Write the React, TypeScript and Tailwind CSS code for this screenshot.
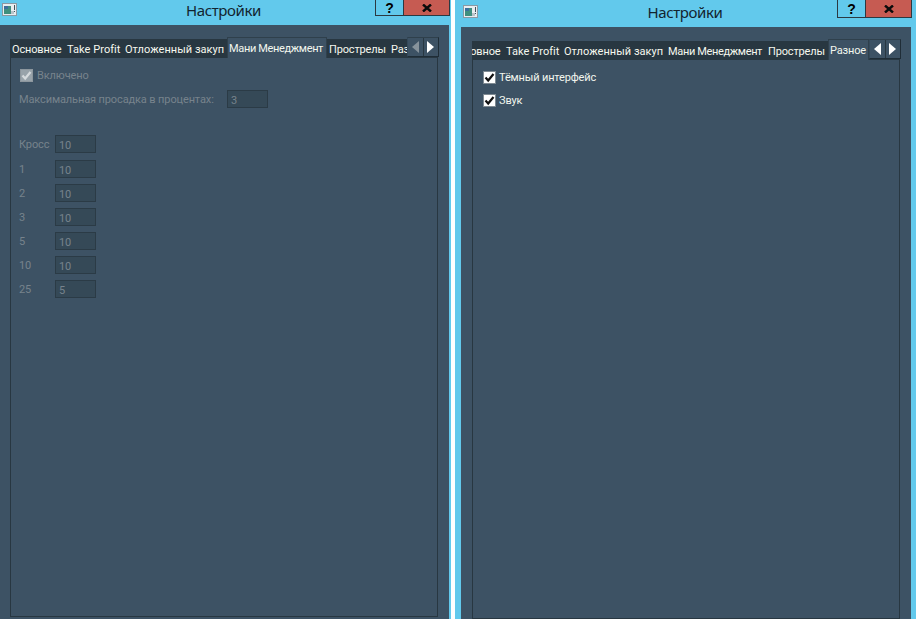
const font = "[font-family:Roboto,sans-serif]";

function WinIcon() {
  return (
    <svg width="15" height="13" viewBox="0 0 15 13" className="shrink-0">
      <rect x="0.5" y="0.5" width="14" height="12" fill="#e8edf0" stroke="#8b99a3" />
      <rect x="2" y="3" width="7" height="8" fill="#3f8f7f" />
      <rect x="2" y="3" width="4" height="3" fill="#3b6f9c" />
      <rect x="9" y="8" width="3" height="3" fill="#b9c3c9" />
      <rect x="12" y="2" width="1" height="5" fill="#44525c" />
      <rect x="12" y="8" width="1" height="1" fill="#44525c" />
    </svg>
  );
}

function TitleBar({ h, btnH, titleClass, iconTop }: { h: string; btnH: string; titleClass: string; iconTop: string }) {
  return (
    <div className={`relative flex items-start justify-center bg-[#62c9ec] ${h}`}>
      <div className={`absolute left-[2px] ${iconTop}`}>
        <WinIcon />
      </div>
      <span className={`-ml-[2px] text-[15px] leading-[20px] tracking-[-0.4px] text-[#12242f] font-['Noto_Sans',sans-serif] ${titleClass}`}>Настройки</span>
      <div className={`absolute right-[-1px] top-0 flex ${btnH}`}>
        <div className="flex w-[29px] items-center justify-center border border-t-0 border-[#2b3942] bg-[#62c9ec] text-[14px] leading-none font-bold text-black font-['Liberation_Sans',sans-serif]">?</div>
        <div className="flex w-[46px] items-center justify-center border-b border-r border-[#2b3942] bg-[#c65b52]">
          <svg width="10" height="8" viewBox="0 0 10 8">
            <path d="M1 0.5 L9 7.5 M9 0.5 L1 7.5" stroke="#0b0b0b" strokeWidth="2.4" fill="none" />
          </svg>
        </div>
      </div>
    </div>
  );
}

type Tab = { label: string; w: string; track: string };

function Tabs({ tabs, selected, offset, leftDim }: { tabs: Tab[]; selected: number; offset: string; leftDim: boolean }) {
  return (
    <div className="relative h-[21px]">
      <div className="absolute inset-x-0 bottom-0 top-[2px] overflow-hidden bg-[#283741]" />
      <div className="absolute inset-0 overflow-hidden">
        <div className={`flex h-full w-max items-stretch ${offset}`}>
          {tabs.map((t, i) => (
            <div
              key={t.label}
              className={`${t.w} ${t.track} shrink-0 whitespace-nowrap text-[11px] leading-[19px] ${
                i === selected
                  ? "border border-b-0 border-[#2f404c] bg-[#3d5264] pl-[1px] pt-[1px] text-[#f2f6ee]"
                  : "pl-[2px] pt-[3px] text-[#f6f8ef]"
              }`}
            >
              {t.label}
            </div>
          ))}
        </div>
      </div>
      <div className="absolute right-[-1px] top-0 flex h-[20px] w-[32px] border border-l-[#34495a] border-t-[#2f404c] border-b-[#1f2d37] border-r-[#1f2d37] bg-[#3d5264]">
        <div className="flex flex-1 items-center justify-center border-r border-[#283741]">
          <svg width="7" height="12" viewBox="0 0 7 12">
            <polygon points="7,0 7,12 0,6" fill={leftDim ? "#86929b" : "#ffffff"} />
          </svg>
        </div>
        <div className="flex flex-1 items-center justify-center">
          <svg width="7" height="12" viewBox="0 0 7 12">
            <polygon points="0,0 0,12 7,6" fill="#ffffff" />
          </svg>
        </div>
      </div>
    </div>
  );
}

function Field({ value }: { value: string }) {
  return (
    <div className="h-[18px] w-[41px] border border-[#2b3b46] bg-[#354957] pl-[3px] pt-[1px] text-[11px] leading-[17px] text-[#77838c]">
      {value}
    </div>
  );
}

function Check({ disabled }: { disabled?: boolean }) {
  return (
    <div className={`flex h-[13px] w-[13px] shrink-0 items-center justify-center border ${disabled ? "border-[#8d979e] bg-[#98a3aa]" : "border-[#7f8a92] bg-white"}`}>
      <svg width="11" height="11" viewBox="0 0 11 11">
        <path d="M1.5 5.5 L4.2 8.5 L9.5 2" fill="none" stroke={disabled ? "#d5dadd" : "#111111"} strokeWidth="2.2" />
      </svg>
    </div>
  );
}

const rows: [string, string][] = [
  ["1", "10"],
  ["2", "10"],
  ["3", "10"],
  ["5", "10"],
  ["10", "10"],
  ["25", "5"],
];

const leftTabs: Tab[] = [
  { label: "Основное", w: "w-[55px]", track: "tracking-[-0.15px]" },
  { label: "Take Profit", w: "w-[58px]", track: "tracking-[0.05px]" },
  { label: "Отложенный закуп", w: "w-[104px]", track: "tracking-[0.05px]" },
  { label: "Мани Менеджмент", w: "w-[100px]", track: "tracking-[-0.35px]" },
  { label: "Прострелы", w: "w-[62px]", track: "tracking-[-0.15px]" },
  { label: "Разное", w: "w-[45px]", track: "tracking-[-0.15px]" },
];

const rightTabs: Tab[] = [
  { label: "Основное", w: "w-[55px]", track: "tracking-[-0.15px]" },
  { label: "Take Profit", w: "w-[58px]", track: "tracking-[0.05px]" },
  { label: "Отложенный закуп", w: "w-[104px]", track: "tracking-[0.05px]" },
  { label: "Мани Менеджмент", w: "w-[100px]", track: "tracking-[-0.35px]" },
  { label: "Прострелы", w: "w-[62px]", track: "tracking-[-0.15px]" },
  { label: "Разное", w: "w-[41px]", track: "tracking-[-0.15px]" },
];

export default function App() {
  return (
    <div className={`flex h-[619px] w-[916px] overflow-hidden bg-[#62c9ec] ${font}`}>
      <div className="flex w-[449px] shrink-0 flex-col">
        <TitleBar h="h-[25px]" btnH="h-[16px]" titleClass="pt-0" iconTop="top-[3px]" />
        <div className="flex min-h-0 flex-1 flex-col bg-[#3d5264] pb-[2px] pl-[10px] pr-[11px] pt-[12px]">
          <Tabs tabs={leftTabs} selected={3} offset="ml-0" leftDim />
          <div className="flex-1 border border-t-0 border-[#283741] pt-[11px] text-[11px] tracking-[-0.12px] text-[#77838c]">
            <div className="ml-[9px] flex h-[13px] items-center gap-[4px]">
              <Check disabled />
              <span className="pt-[2px]">Включено</span>
            </div>
            <div className="ml-[8px] mt-[8px] flex h-[18px] items-center">
              <span className="w-[208px] pt-[2px]">Максимальная просадка в процентах:</span>
              <Field value="3" />
            </div>
            <div className="ml-[8px] mt-[27px] flex h-[18px] items-center">
              <span className="w-[36px] pt-[2px]">Кросс</span>
              <Field value="10" />
            </div>
            <div className="ml-[8px] mt-[7px] flex flex-col gap-[6px]">
              {rows.map(([label, value]) => (
                <div key={label} className="flex h-[18px] items-center">
                  <span className="w-[36px] pt-[2px]">{label}</span>
                  <Field value={value} />
                </div>
              ))}
            </div>
          </div>
        </div>
      </div>
      <div className="ml-[2px] w-[4px] shrink-0 bg-white" />
      <div className="ml-[6px] flex w-[450px] shrink-0 flex-col">
        <TitleBar h="h-[27px]" btnH="h-[18px]" titleClass="pt-[2px]" iconTop="top-[5px]" />
        <div className="flex min-h-0 flex-1 flex-col bg-[#3d5264] pl-[11px] pr-[11px] pt-[12px]">
          <Tabs tabs={rightTabs} selected={5} offset="ml-[-23px]" leftDim={false} />
          <div className="flex-1 border border-t-0 border-[#283741] pl-[10px] pt-[11px] text-[11px] tracking-[-0.15px] text-[#f2f6ee]">
            <div className="flex h-[13px] items-center gap-[3px]">
              <Check />
              <span className="pt-[1px]">Тёмный интерфейс</span>
            </div>
            <div className="mt-[10px] flex h-[13px] items-center gap-[3px]">
              <Check />
              <span className="pt-[1px]">Звук</span>
            </div>
          </div>
        </div>
      </div>
    </div>
  );
}
